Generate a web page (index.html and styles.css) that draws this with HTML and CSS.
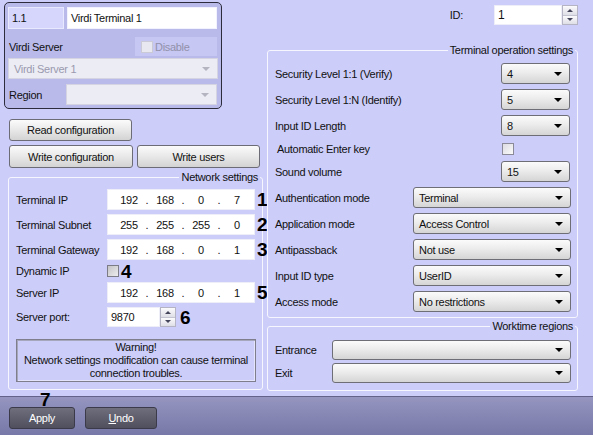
FILE: index.html
```html
<!DOCTYPE html>
<html>
<head>
  <title>Virdi Terminal</title>
  <link rel="stylesheet" href="styles.css">
</head>
<body>
  <div class="window">
    <div class="content">
      <div class="left">
        <div class="ident">
          <div class="ident-top">
            <div class="num-box">1.1</div>
            <div class="name-box">Virdi Terminal 1</div>
          </div>
          <div class="server-row">
            <span>Virdi Server</span>
            <div class="disable"><span class="check off"></span>Disable</div>
          </div>
          <div class="select disabled server-sel">Virdi Server 1</div>
          <div class="region-row">
            <span>Region</span>
            <div class="select disabled region-sel"></div>
          </div>
        </div>

        <div class="actions">
          <button class="btn read-btn">Read configuration</button>
          <div class="btn-row">
            <button class="btn write-btn">Write configuration</button>
            <button class="btn users-btn">Write users</button>
          </div>
        </div>

        <fieldset class="group net">
          <legend>Network settings</legend>
          <div class="net-rows">
            <div class="net-row">
              <span class="lab">Terminal IP</span>
              <div class="ip"><span class="seg">192</span><span class="dot">.</span><span class="seg">168</span><span class="dot">.</span><span class="seg">0</span><span class="dot">.</span><span class="seg">7</span></div>
              <span class="mark">1</span>
            </div>
            <div class="net-row">
              <span class="lab">Terminal Subnet</span>
              <div class="ip"><span class="seg">255</span><span class="dot">.</span><span class="seg">255</span><span class="dot">.</span><span class="seg">255</span><span class="dot">.</span><span class="seg">0</span></div>
              <span class="mark">2</span>
            </div>
            <div class="net-row">
              <span class="lab">Terminal Gateway</span>
              <div class="ip"><span class="seg">192</span><span class="dot">.</span><span class="seg">168</span><span class="dot">.</span><span class="seg">0</span><span class="dot">.</span><span class="seg">1</span></div>
              <span class="mark">3</span>
            </div>
            <div class="net-row short">
              <span class="lab">Dynamic IP</span>
              <span class="check grey"></span>
              <span class="mark">4</span>
            </div>
            <div class="net-row">
              <span class="lab">Server IP</span>
              <div class="ip"><span class="seg">192</span><span class="dot">.</span><span class="seg">168</span><span class="dot">.</span><span class="seg">0</span><span class="dot">.</span><span class="seg">1</span></div>
              <span class="mark">5</span>
            </div>
            <div class="net-row port-row">
              <span class="lab">Server port:</span>
              <div class="spin-field port-field">
                <span class="spin-text">9870</span>
                <div class="spinner"><span class="up"></span><span class="down"></span></div>
              </div>
              <span class="mark six">6</span>
            </div>
            <div class="warning">
              Warning!<br>
              Network settings modification can cause terminal<br>
              connection troubles.
            </div>
          </div>
        </fieldset>
      </div>

      <div class="right">
        <div class="id-line">
          <span class="id-lab">ID:</span>
          <div class="spin-field id-field">
            <span class="spin-text">1</span>
            <div class="spinner"><span class="up"></span><span class="down"></span></div>
          </div>
        </div>

        <fieldset class="group ops">
          <legend>Terminal operation settings</legend>
          <div class="ops-rows">
            <div class="ops-row"><span>Security Level 1:1 (Verify)</span><div class="select small">4</div></div>
            <div class="ops-row"><span>Security Level 1:N (Identify)</span><div class="select small">5</div></div>
            <div class="ops-row"><span>Input ID Length</span><div class="select small">8</div></div>
            <div class="ops-row short"><span class="indent">Automatic Enter key</span><div class="check-cell"><span class="check"></span></div></div>
            <div class="ops-row"><span>Sound volume</span><div class="select small">15</div></div>
            <div class="ops-row"><span>Authentication mode</span><div class="select large">Terminal</div></div>
            <div class="ops-row"><span>Application mode</span><div class="select large">Access Control</div></div>
            <div class="ops-row"><span>Antipassback</span><div class="select large">Not use</div></div>
            <div class="ops-row"><span>Input ID type</span><div class="select large">UserID</div></div>
            <div class="ops-row"><span>Access mode</span><div class="select large">No restrictions</div></div>
          </div>
        </fieldset>

        <fieldset class="group regions">
          <legend>Worktime regions</legend>
          <div class="reg-rows">
            <div class="reg-row"><span>Entrance</span><div class="select reg-sel"></div></div>
            <div class="reg-row"><span>Exit</span><div class="select reg-sel"></div></div>
          </div>
        </fieldset>
      </div>
    </div>

    <div class="footer">
      <span class="mark seven">7</span>
      <button class="dark-btn apply">Apply</button>
      <button class="dark-btn undo"><u>U</u>ndo</button>
    </div>
  </div>
</body>
</html>
```

FILE: styles.css
```css
* {
  box-sizing: border-box;
}
body {
  margin: 0;
  width: 593px;
  height: 435px;
  overflow: hidden;
  background: #cccdf9;
  font-family: "Liberation Sans", Arial, sans-serif;
  font-size: 11px;
  letter-spacing: -0.3px;
  color: #111;
}
button {
  font: inherit;
  letter-spacing: inherit;
  color: inherit;
  padding: 0;
}

.window {
  display: flex;
  flex-direction: column;
  height: 435px;
}
.content {
  display: grid;
  grid-template-columns: 263px 311px;
  column-gap: 4px;
  height: 396px;
}

/* top left card */
.left {
  padding-top: 2px;
}
.ident {
  margin-left: 4px;
  width: 218px;
  height: 107px;
  border: 1px solid #2c2c3c;
  border-radius: 5px;
  background: #b9b9ea;
  padding: 4px 4px 0 3px;
}
.ident-top {
  display: flex;
  gap: 3px;
}
.num-box {
  width: 56px;
  height: 22px;
  background: #d6d6fd;
  border: 1px solid #e8e8ff;
  padding: 0 3px;
  line-height: 20px;
}
.name-box {
  width: 150px;
  height: 22px;
  background: #fff;
  border: 1px solid #f2f2ff;
  padding: 0 3px;
  line-height: 20px;
}
.server-row {
  display: flex;
  justify-content: space-between;
  align-items: center;
  height: 19px;
  margin-top: 8px;
  padding-left: 1px;
}
.disable {
  display: flex;
  align-items: center;
  gap: 2px;
  width: 82px;
  height: 19px;
  padding-left: 6px;
  background: #c7c7f3;
  color: #9191aa;
}
.server-sel {
  width: 210px;
  margin-top: 2px;
}
.region-row {
  display: flex;
  justify-content: space-between;
  align-items: center;
  margin-top: 5px;
  padding-left: 1px;
}
.region-sel {
  width: 151px;
}

/* checkbox */
.check {
  display: inline-block;
  flex-shrink: 0;
  width: 12px;
  height: 12px;
  border: 1px solid #8a8a98;
  background: linear-gradient(135deg, #dcdce2, #fbfbfb);
}
.check.off {
  border-color: #cacad6;
  background: #e8e8f0;
}
.check.grey {
  border-color: #7c7c86;
  background: linear-gradient(135deg, #c4c4c8, #ececee);
}

/* combo box */
.select {
  display: flex;
  align-items: center;
  justify-content: space-between;
  flex-shrink: 0;
  height: 21px;
  padding: 0 7px 0 5px;
  border: 1px solid #6e6e76;
  border-radius: 3px;
  background: linear-gradient(#fbfbfb, #ececec 45%, #d5d5d5);
}
.select::after {
  content: "";
  margin-left: auto;
  border-left: 4px solid transparent;
  border-right: 4px solid transparent;
  border-top: 4px solid #000;
}
.select.disabled {
  border-color: #d4d4e2;
  border-radius: 0;
  background: #ececf5;
  color: #9a9aae;
}
.select.disabled::after {
  border-top-color: #b4b4c0;
}

/* buttons */
.actions {
  margin-top: 10px;
  padding-left: 9px;
}
.btn {
  display: block;
  height: 22px;
  border: 1px solid #6c6c76;
  border-radius: 3px;
  background: linear-gradient(#fbfbfb, #e8e8e8 50%, #d3d3d3);
  text-align: center;
}
.read-btn {
  width: 123px;
}
.btn-row {
  display: flex;
  gap: 4px;
  margin-top: 4px;
}
.write-btn {
  width: 124px;
  height: 23px;
}
.users-btn {
  width: 123px;
  height: 23px;
}

/* group boxes */
.group {
  margin: 0;
  min-width: 0;
  border: 1px solid #f6f6ff;
  border-radius: 3px;
}
.group legend {
  margin-left: auto;
  margin-right: -4px;
  padding: 0 2px;
  line-height: 14px;
}

/* network settings */
.net {
  width: 255px;
  margin: 2px 0 0 8px;
  padding: 5px 6px 7px 7px;
}
.net-rows {
  display: flex;
  flex-direction: column;
  gap: 4px;
}
.net-row {
  display: flex;
  align-items: center;
  height: 21px;
}
.net-row.short {
  height: 14px;
}
.net-row.port-row {
  height: 20px;
}
.lab {
  flex-shrink: 0;
  width: 91px;
  white-space: nowrap;
}
.ip {
  display: flex;
  flex-shrink: 0;
  align-items: center;
  width: 148px;
  height: 21px;
  padding-left: 7px;
  background: #fff;
  border: 1px solid #eeeef8;
}
.seg {
  width: 28px;
  text-align: center;
}
.dot {
  width: 8px;
  text-align: center;
}
.mark {
  flex-shrink: 0;
  margin-left: 2px;
  font-size: 19px;
  font-weight: bold;
  letter-spacing: 0;
  line-height: 1;
  color: #000;
}
.mark.six {
  margin-left: 4px;
}
.warning {
  margin-top: 8px;
  height: 43px;
  padding-top: 1px;
  border: 1px solid #7e7e8c;
  box-shadow: inset 1px 1px 0 #a6a6bc, inset -1px -1px 0 #e4e4fc;
  text-align: center;
  line-height: 13px;
}

/* spin edits */
.spin-field {
  display: flex;
  flex-shrink: 0;
  height: 20px;
}
.spin-text {
  flex: 1;
  background: #fff;
  border: 1px solid #eeeef8;
  padding: 0 3px;
  line-height: 18px;
}
.spinner {
  display: flex;
  flex-direction: column;
  width: 16px;
  border: 1px solid #b4b4c4;
  background: #f0f0f4;
}
.spinner span {
  flex: 1;
  display: flex;
  align-items: center;
  justify-content: center;
  background: linear-gradient(#fbfbfd, #dedee6);
}
.spinner span + span {
  border-top: 1px solid #c4c4d0;
}
.spinner .up::before {
  content: "";
  border-left: 3px solid transparent;
  border-right: 3px solid transparent;
  border-bottom: 3px solid #44445a;
}
.spinner .down::before {
  content: "";
  border-left: 3px solid transparent;
  border-right: 3px solid transparent;
  border-top: 3px solid #44445a;
}
.port-field {
  width: 69px;
}

/* right column */
.id-line {
  display: flex;
  align-items: center;
  justify-content: flex-end;
  height: 20px;
  margin-top: 5px;
}
.id-lab {
  margin-right: 31px;
}
.id-field {
  width: 84px;
  height: 20px;
}
.id-field .spin-text {
  font-size: 12px;
}

.ops {
  margin-top: 18px;
  padding: 6px 6px 5px 7px;
}
.ops-rows {
  display: flex;
  flex-direction: column;
  gap: 5px;
}
.ops-row {
  display: flex;
  align-items: center;
  justify-content: space-between;
  height: 21px;
}
.ops-row.short {
  height: 15px;
}
.indent {
  padding-left: 2px;
}
.select.small {
  width: 69px;
  margin-right: 1px;
}
.select.large {
  width: 158px;
}
.check-cell {
  width: 69px;
  margin-right: 1px;
  padding-left: 1px;
}
.check-cell .check {
  display: block;
}

.regions {
  margin-top: 1px;
  padding: 7px 6px 7px 7px;
}
.reg-rows {
  display: flex;
  flex-direction: column;
  gap: 3px;
}
.reg-row {
  display: flex;
  align-items: center;
  justify-content: space-between;
  height: 20px;
}
.reg-sel {
  width: 239px;
  height: 20px;
}

/* footer */
.footer {
  position: relative;
  display: flex;
  gap: 10px;
  height: 39px;
  padding: 10px 0 0 9px;
  border-top: 1px solid #62628a;
  background: linear-gradient(#9595c0, #7878a8);
}
.dark-btn {
  height: 22px;
  border: 1px solid #3a3a4a;
  border-radius: 3px;
  background: linear-gradient(#6e6e7c, #4f4f5e);
  color: #fff;
  text-align: center;
}
.apply {
  width: 66px;
}
.undo {
  width: 72px;
}
.mark.seven {
  position: absolute;
  left: 40px;
  top: -7px;
  margin: 0;
}
```
